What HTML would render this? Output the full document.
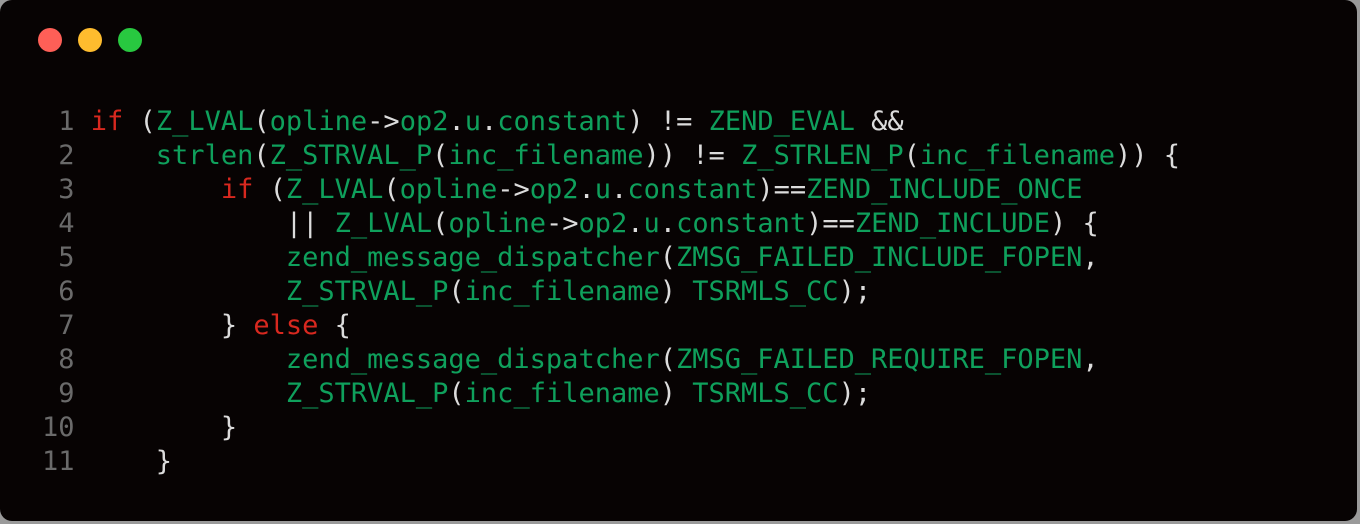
<html><head><style>
body{margin:0;width:1360px;height:524px;background:#9a9a9a;overflow:hidden}
.w{position:absolute;left:0;top:0;width:1357px;height:521px;background:#070303;border-radius:12px}
.d{position:absolute;top:28px;width:24px;height:24px;border-radius:50%}
pre{position:absolute;left:42px;top:104.5px;margin:0;font:27px/34px "DejaVu Sans Mono",monospace;color:#dcdcdc}
.n{color:#6a6a6a}.k{color:#d8281f}.g{color:#0fa05c}
</style></head><body><div class="w">
<div class="d" style="left:38px;background:#fe5f57"></div>
<div class="d" style="left:78px;background:#febc2e"></div>
<div class="d" style="left:118px;background:#28c840"></div>
<pre><span class="n"> 1</span> <span class="k">if</span> (<span class="g">Z_LVAL</span>(<span class="g">opline</span>-&gt;<span class="g">op2</span>.<span class="g">u</span>.<span class="g">constant</span>) != <span class="g">ZEND_EVAL</span> &amp;&amp;
<span class="n"> 2</span>     <span class="g">strlen</span>(<span class="g">Z_STRVAL_P</span>(<span class="g">inc_filename</span>)) != <span class="g">Z_STRLEN_P</span>(<span class="g">inc_filename</span>)) {
<span class="n"> 3</span>         <span class="k">if</span> (<span class="g">Z_LVAL</span>(<span class="g">opline</span>-&gt;<span class="g">op2</span>.<span class="g">u</span>.<span class="g">constant</span>)==<span class="g">ZEND_INCLUDE_ONCE</span>
<span class="n"> 4</span>             || <span class="g">Z_LVAL</span>(<span class="g">opline</span>-&gt;<span class="g">op2</span>.<span class="g">u</span>.<span class="g">constant</span>)==<span class="g">ZEND_INCLUDE</span>) {
<span class="n"> 5</span>             <span class="g">zend_message_dispatcher</span>(<span class="g">ZMSG_FAILED_INCLUDE_FOPEN</span>,
<span class="n"> 6</span>             <span class="g">Z_STRVAL_P</span>(<span class="g">inc_filename</span>) <span class="g">TSRMLS_CC</span>);
<span class="n"> 7</span>         } <span class="k">else</span> {
<span class="n"> 8</span>             <span class="g">zend_message_dispatcher</span>(<span class="g">ZMSG_FAILED_REQUIRE_FOPEN</span>,
<span class="n"> 9</span>             <span class="g">Z_STRVAL_P</span>(<span class="g">inc_filename</span>) <span class="g">TSRMLS_CC</span>);
<span class="n">10</span>         }
<span class="n">11</span>     }</pre>
</div></body></html>
